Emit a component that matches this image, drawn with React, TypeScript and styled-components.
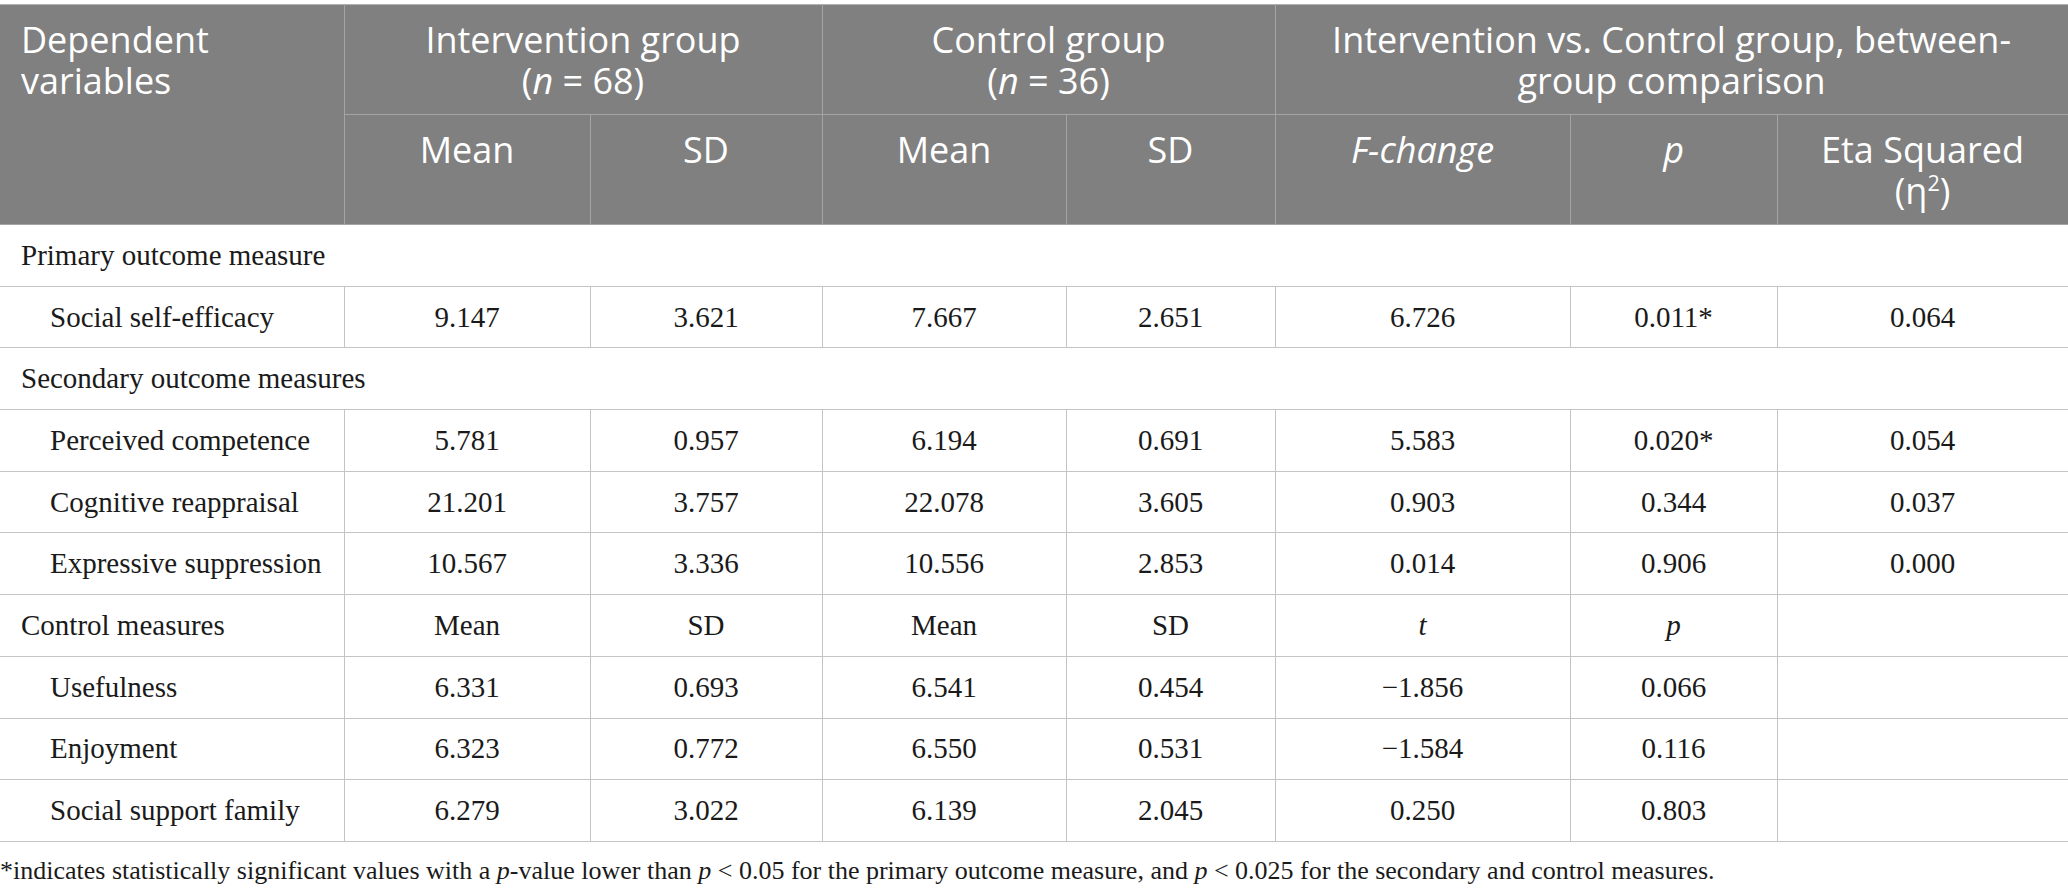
import styled, { createGlobalStyle } from "styled-components";

const GlobalStyle = createGlobalStyle`
  body {
    margin: 0;
    background: #ffffff;
  }
`

const Wrap = styled.div`
  width: 2068px;
  padding-top: 4px;
  box-sizing: border-box;
`

const Table = styled.table`
  width: 2068px;
  border-collapse: collapse;
  table-layout: fixed;
  font-family: "Liberation Serif", "Times New Roman", serif;
  font-size: 29px;
  color: #1a1a1a;
  border-top: 1px solid #b3b3b3;
  border-right: 1px solid #bdbdbd;
`

const HeadRow = styled.tr`
  height: 110px;
`

const Th = styled.th<{ $left?: boolean }>`
  background: #7f807f;
  color: #ffffff;
  font-family: "Open Sans", "Noto Sans", sans-serif;
  font-weight: 400;
  font-size: 36px;
  line-height: 41px;
  vertical-align: top;
  text-align: ${p => (p.$left ? "left" : "center")};
  padding: 14px ${p => (p.$left ? "21px" : "8px")} 0;
  border: 1px solid #a3a4a3;
  border-top: none;
  &:first-child {
    border-left: none;
  }
`

const Sup = styled.sup`
  font-size: 0.6em;
  line-height: 0;
`

const Row = styled.tr`
  height: 61.7px;
`

const Section = styled.td`
  padding: 0 21px;
  text-align: left;
  border-bottom: 1px solid #c4c4c4;
`

const Label = styled.td<{ $indent?: number }>`
  padding: 0 0 0 ${p => p.$indent ?? 50}px;
  text-align: left;
  border: 1px solid #c4c4c4;
  border-left: none;
`

const Cell = styled.td`
  text-align: center;
  padding: 0;
  border: 1px solid #c4c4c4;
`

const Note = styled.p`
  margin: 14px 0 0;
  font-family: "Liberation Serif", "Times New Roman", serif;
  font-size: 26px;
  color: #1a1a1a;
`

const widths = [344, 246, 232, 244, 209, 295, 207, 291];

const secondary = [
  ["Perceived competence", "5.781", "0.957", "6.194", "0.691", "5.583", "0.020*", "0.054"],
  ["Cognitive reappraisal", "21.201", "3.757", "22.078", "3.605", "0.903", "0.344", "0.037"],
  ["Expressive suppression", "10.567", "3.336", "10.556", "2.853", "0.014", "0.906", "0.000"],
];

const control = [
  ["Usefulness", "6.331", "0.693", "6.541", "0.454", "\u22121.856", "0.066", ""],
  ["Enjoyment", "6.323", "0.772", "6.550", "0.531", "\u22121.584", "0.116", ""],
  ["Social support family", "6.279", "3.022", "6.139", "2.045", "0.250", "0.803", ""],
];

const DataRow = ({ cells }: { cells: string[] }) => (
  <Row>
    <Label>{cells[0]}</Label>
    {cells.slice(1).map((c, i) => (
      <Cell key={i}>{c}</Cell>
    ))}
  </Row>
)

const App = () => {
  return (
    <Wrap>
      <GlobalStyle />
      <Table>
        <colgroup>
          {widths.map((w, i) => (
            <col key={i} style={{ width: w }} />
          ))}
        </colgroup>
        <thead>
          <HeadRow>
            <Th $left rowSpan={2}>Dependent<br />variables</Th>
            <Th colSpan={2}>Intervention group<br />(<i>n</i> = 68)</Th>
            <Th colSpan={2}>Control group<br />(<i>n</i> = 36)</Th>
            <Th colSpan={3}>Intervention vs. Control group, between-<br />group comparison</Th>
          </HeadRow>
          <HeadRow>
            <Th>Mean</Th>
            <Th>SD</Th>
            <Th>Mean</Th>
            <Th>SD</Th>
            <Th><i>F-change</i></Th>
            <Th><i>p</i></Th>
            <Th>Eta Squared<br />(η<Sup>2</Sup>)</Th>
          </HeadRow>
        </thead>
        <tbody>
          <Row>
            <Section colSpan={8}>Primary outcome measure</Section>
          </Row>
          <DataRow cells={["Social self-efficacy", "9.147", "3.621", "7.667", "2.651", "6.726", "0.011*", "0.064"]} />
          <Row>
            <Section colSpan={8}>Secondary outcome measures</Section>
          </Row>
          {secondary.map((r, i) => (
            <DataRow key={i} cells={r} />
          ))}
          <Row>
            <Label $indent={21}>Control measures</Label>
            <Cell>Mean</Cell>
            <Cell>SD</Cell>
            <Cell>Mean</Cell>
            <Cell>SD</Cell>
            <Cell><i>t</i></Cell>
            <Cell><i>p</i></Cell>
            <Cell></Cell>
          </Row>
          {control.map((r, i) => (
            <DataRow key={i} cells={r} />
          ))}
        </tbody>
      </Table>
      <Note>
        *indicates statistically significant values with a <i>p</i>-value lower than <i>p</i> &lt; 0.05 for the primary outcome measure, and <i>p</i> &lt; 0.025 for the secondary and control measures.
      </Note>
    </Wrap>
  )
}

export default App;
